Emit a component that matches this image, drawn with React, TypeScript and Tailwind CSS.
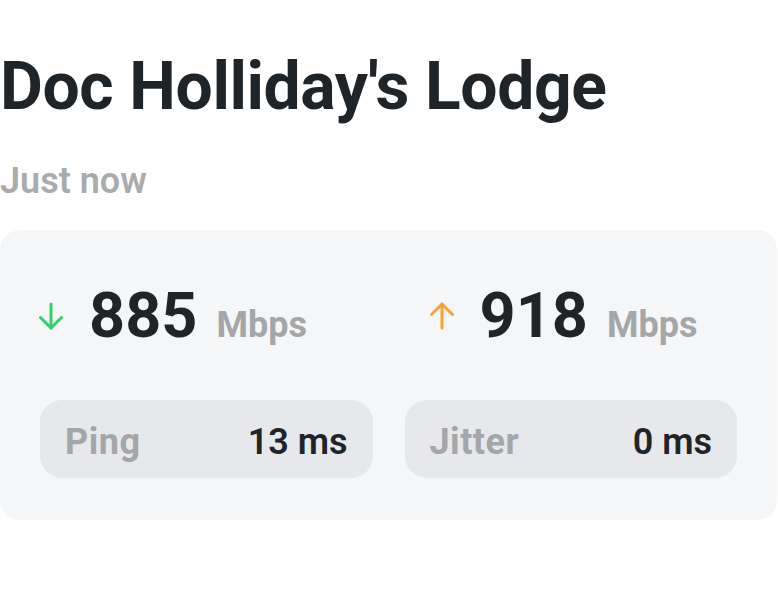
import React from "react";

function ArrowDown({ color }: { color: string }) {
  return (
    <svg width="26" height="28" viewBox="0 0 26 28" fill="none" stroke={color} strokeWidth="3" strokeLinecap="round" strokeLinejoin="round">
      <path d="M13 2 V26" />
      <path d="M2.5 15.5 L13 26 L23.5 15.5" />
    </svg>
  );
}

function ArrowUp({ color }: { color: string }) {
  return (
    <svg width="26" height="28" viewBox="0 0 26 28" fill="none" stroke={color} strokeWidth="3" strokeLinecap="round" strokeLinejoin="round">
      <path d="M13 26 V2" />
      <path d="M2.5 12.5 L13 2 L23.5 12.5" />
    </svg>
  );
}

function Speed({ up, value }: { up?: boolean; value: string }) {
  return (
    <div className="flex items-center">
      <div className="w-[26px] flex justify-center">
        {up ? <ArrowUp color="#f5a431" /> : <ArrowDown color="#2fcf6c" />}
      </div>
      <div className="flex items-baseline ml-[25px]">
        <span className="text-[63px] leading-none font-bold text-[#1f2428]">{value}</span>
        <span className="text-[36px] leading-none font-bold text-[#a4a6a9] ml-[19px]">Mbps</span>
      </div>
    </div>
  );
}

function Stat({ label, value }: { label: string; value: string }) {
  return (
    <div className="h-[78px] rounded-[22px] bg-[#e6e8eb] flex items-center justify-between px-[25px] pt-[5px]">
      <span className="text-[36px] leading-none font-bold tracking-[0.5px] text-[#a4a6a9]">{label}</span>
      <span className="text-[36px] leading-none font-semibold text-[#1f2428]">{value}</span>
    </div>
  );
}

export default function App() {
  return (
    <div className="w-[778px] h-[599px] bg-white overflow-hidden" style={{ fontFamily: "Roboto, 'Noto Sans', sans-serif" }}>
      <div className="pt-[54px]">
        <h1 className="text-[66px] leading-none font-bold text-[#1f2428] tracking-[-0.4px]">Doc Holliday's Lodge</h1>
        <div className="mt-[43px] text-[36px] leading-none font-semibold text-[#a9abad]">Just now</div>
        <div className="mt-[31px] w-[777px] rounded-[20px] bg-[#f4f6f8] pt-[54px] pb-[42px] px-[40px]">
          <div className="grid grid-cols-2 gap-[32px]">
            <div className="ml-[-2px]">
              <Speed value="885" />
            </div>
            <div className="ml-[24px]">
              <Speed up value="918" />
            </div>
          </div>
          <div className="grid grid-cols-2 gap-[32px] mt-[53px]">
            <Stat label="Ping" value="13 ms" />
            <Stat label="Jitter" value="0 ms" />
          </div>
        </div>
      </div>
    </div>
  );
}
